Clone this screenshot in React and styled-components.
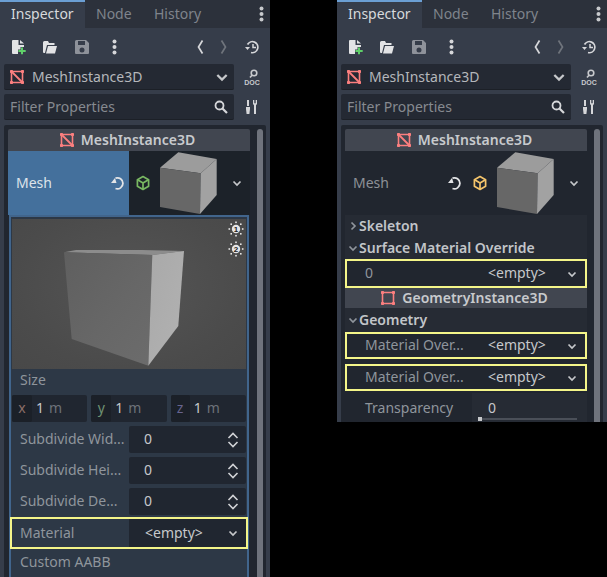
import React from "react";
import styled, { createGlobalStyle } from "styled-components";

const Global = createGlobalStyle`
    html, body { margin: 0; background: #000; }
    body { font-family: "Noto Sans", sans-serif; font-size: 14px; }
`;

const Page = styled.div`
    width: 607px;
    height: 577px;
    display: flex;
    align-items: flex-start;
    gap: 67px;
    overflow: hidden;
`;

const Panel = styled.div`
    width: 270px;
    height: ${(p) => p.$height}px;
    background: #363d4a;
    overflow: hidden;
    display: flex;
    flex-direction: column;
    flex-shrink: 0;
`;

const TabBar = styled.div`
    height: 28px;
    display: flex;
    background: #2c313b;
    flex-shrink: 0;
`;

const Tab = styled.div`
    height: 28px;
    box-sizing: border-box;
    padding-left: 11px;
    width: ${(p) => p.$w}px;
    color: ${(p) => (p.$active ? "#d7d9dc" : "#7f848c")};
    background: ${(p) => (p.$active ? "#363d4a" : "transparent")};
    border-top: 2px solid ${(p) => (p.$active ? "#6b9fd4" : "transparent")};
    line-height: 24px;
`;

const TabMenu = styled.div`
    margin-left: auto;
    width: 7px;
    margin-right: 5px;
    display: flex;
    align-items: center;
`;

const Toolbar = styled.div`
    height: 36px;
    box-sizing: border-box;
    padding-top: 2px;
    display: flex;
    align-items: center;
    flex-shrink: 0;
`;

const ToolButton = styled.div`
    width: ${(p) => p.$w || 16}px;
    height: 16px;
    margin-left: ${(p) => p.$ml || 0}px;
    display: flex;
    justify-content: center;
    flex-shrink: 0;
`;

const FieldRow = styled.div`
    height: 26px;
    display: flex;
    align-items: center;
    margin: 0 0 4px 4px;
    flex-shrink: 0;
`;

const Field = styled.div`
    width: 230px;
    height: 26px;
    box-sizing: border-box;
    background: #242933;
    border-radius: 2px;
    border-bottom: 1px solid #1c2027;
    display: flex;
    align-items: center;
    padding: 0 ${(p) => p.$pr}px 0 ${(p) => p.$pl}px;
    color: ${(p) => p.$color};
    gap: 6px;
`;

const SideButton = styled.div`
    width: 36px;
    display: flex;
    justify-content: center;
    flex-shrink: 0;
`;

const Grow = styled.span`
    flex: 1;
`;

const Label = styled.span`
    margin-top: -2px;
`;

const NodeName = styled.span`
    margin-left: 1px;
`;

const Inspector = styled.div`
    margin: 1px 4px 0;
    padding: 4px 3px 0 4px;
    background: #21262f;
    border-radius: 2px 2px 0 0;
    flex: 1;
    display: flex;
    gap: 7px;
    min-height: 0;
`;

const Content = styled.div`
    width: 242px;
    flex-shrink: 0;
    display: flex;
    flex-direction: column;
`;

const ScrollBar = styled.div`
    width: 6px;
    height: 500px;
    background: #6f737c;
    border-radius: 3px 3px 0 0;
    flex-shrink: 0;
`;

const ClassHeader = styled.div`
    height: ${(p) => p.$h || 22}px;
    box-sizing: border-box;
    padding-right: 4px;
    background: #414650;
    border-radius: ${(p) => (p.$flat ? 0 : "2px 2px 0 0")};
    color: #c8cacd;
    font-weight: 600;
    display: flex;
    align-items: center;
    justify-content: center;
    gap: 6px;
    flex-shrink: 0;
`;

const MeshRow = styled.div`
    height: 64px;
    display: flex;
    flex-shrink: 0;
`;

const MeshLabel = styled.div`
    width: 121px;
    box-sizing: border-box;
    padding: 0 3px 0 8px;
    display: flex;
    align-items: center;
    color: ${(p) => (p.$active ? "#dde3ea" : "#8d9197")};
    background: ${(p) => (p.$active ? "#44709c" : "transparent")};
`;

const MeshValue = styled.div`
    width: 121px;
    box-sizing: border-box;
    padding-left: 6px;
    display: flex;
    align-items: center;
    background: ${(p) => (p.$active ? "#1c2229" : "transparent")};
    border-radius: 0 0 0 2px;
`;

const ThumbBox = styled.div`
    width: 64px;
    height: 64px;
    margin: 0 11px 0 5px;
    flex-shrink: 0;
`;

const SubEditor = styled.div`
    margin-left: 1px;
    width: 240px;
    box-sizing: border-box;
    border: 2px solid #41658c;
    border-bottom: none;
    background: #2d3846;
    padding: 2px 1px 0;
    height: 362px;
    flex-shrink: 0;
`;

const Preview = styled.div`
    height: 150px;
    background: radial-gradient(ellipse at 50% 45%, #555 0%, #4b4b4b 70%, #484848 100%);
    position: relative;
`;

const LightButton = styled.div`
    position: absolute;
    right: 2px;
    top: ${(p) => p.$top}px;
    width: 16px;
    height: 16px;
`;

const Caption = styled.div`
    height: 26px;
    line-height: ${(p) => p.$lh || 22}px;
    padding-left: 8px;
    color: #8f959c;
`;

const VectorRow = styled.div`
    display: flex;
    gap: 4px;
    height: 27px;
    margin-bottom: 4px;
`;

const VectorCell = styled.div`
    flex: 1;
    background: #202630;
    border-radius: 2px;
    display: flex;
    align-items: center;
    color: #c6c8cb;
`;

const AxisTag = styled.span`
    width: ${(p) => p.$w}px;
    height: 100%;
    padding-bottom: 2px;
    box-sizing: border-box;
    background: #1b2028;
    border-radius: 2px;
    display: flex;
    align-items: center;
    justify-content: center;
    color: ${(p) => p.$color};
    margin-right: 4px;
`;

const Unit = styled.span`
    color: #6d7279;
    margin: -2px 0 0 5px;
`;

const PropRow = styled.div`
    height: 27px;
    display: flex;
    align-items: center;
    margin-bottom: 4px;
    color: #8f959c;
`;

const PropName = styled.div`
    width: 117px;
    flex-shrink: 0;
    margin-top: -2px;
    padding-left: 8px;
    box-sizing: border-box;
    white-space: nowrap;
`;

const SpinBox = styled.div`
    flex: 1;
    height: 27px;
    background: #202630;
    border-radius: 2px;
    display: flex;
    align-items: center;
    padding: 0 7px 0 15px;
    color: #c6c8cb;
`;

const Highlight = styled.div`
    height: ${(p) => p.$h}px;
    box-sizing: border-box;
    border: 2px solid #f4f589;
    display: flex;
    align-items: stretch;
    color: #8f959c;
    margin: ${(p) => p.$margin};
    flex-shrink: 0;
`;

const HighlightName = styled.div`
    width: ${(p) => p.$w}px;
    flex-shrink: 0;
    box-sizing: border-box;
    padding-left: ${(p) => p.$pl}px;
    display: flex;
    align-items: center;
    white-space: nowrap;
`;

const EmptyValue = styled.div`
    flex: 1;
    display: flex;
    align-items: center;
    background: ${(p) => (p.$dark ? "#202630" : "transparent")};
    color: #c6c8cb;
    padding: 0 7px 0 ${(p) => p.$pl}px;
`;

const SectionRow = styled.div`
    height: ${(p) => p.$h || 22}px;
    display: flex;
    align-items: center;
    background: #262b34;
    color: #c2c5c9;
    font-weight: 600;
    padding-left: 2px;
    flex-shrink: 0;
`;

const SliderRow = styled.div`
    display: flex;
    color: #8f959c;
    height: 32px;
    margin-top: 2px;
`;

const SliderLabel = styled.div`
    width: 127px;
    box-sizing: border-box;
    padding: 5px 0 0 20px;
    flex-shrink: 0;
`;

const SliderBox = styled.div`
    flex: 1;
    background: #262b34;
    padding: 5px 0 0 16px;
    color: #c6c8cb;
    position: relative;
`;

const SliderTrack = styled.div`
    position: absolute;
    left: 6px;
    right: 10px;
    top: 25px;
    height: 2px;
    background: #4a4f58;
`;

const SliderGrabber = styled.div`
    position: absolute;
    left: 0;
    top: -1px;
    width: 4px;
    height: 4px;
    background: #c6c8cb;
`;

function NodeIcon({ cross = true, size = 16 }) {
    return (
        <svg width={size} height={size} viewBox="0 0 16 16" fill="none" stroke="#fc7f7f">
            <path d="M2.500 2.500h11v11h-11z" strokeWidth="1.600" />
            {cross && <path d="M3 3l10 10" strokeWidth="1.800" />}
            <g fill="#fc7f7f" stroke="none">
                <rect x="1" y="1" width="3" height="3" rx=".7" />
                <rect x="12" y="1" width="3" height="3" rx=".7" />
                <rect x="1" y="12" width="3" height="3" rx=".7" />
                <rect x="12" y="12" width="3" height="3" rx=".7" />
            </g>
        </svg>
    );
}

function Chevron({ color = "#c6c8cb", dir = "down", size = 12 }) {
    let d = dir === "down" ? "M2.500 4.500L6 8l3.500-3.500" : "M4.500 2.500L8 6l-3.500 3.500";
    return (
        <svg width={size} height={size} viewBox="0 0 12 12" fill="none" stroke={color} strokeWidth="1.700">
            <path d={d} />
        </svg>
    );
}

function UpDown() {
    return (
        <svg width="12" height="16" viewBox="0 0 12 16" fill="none" stroke="#d0d2d5" strokeWidth="1.600">
            <path d="M1.500 6L6 1.500 10.500 6M1.500 10L6 14.500 10.500 10" />
        </svg>
    );
}

function Dots({ color = "#c8cacd" }) {
    return (
        <svg width="7" height="16" viewBox="0 0 7 16" fill={color}>
            <circle cx="3.500" cy="2.500" r="2" />
            <circle cx="3.500" cy="8" r="2" />
            <circle cx="3.500" cy="13.500" r="2" />
        </svg>
    );
}

function NewIcon() {
    return (
        <svg width="16" height="16" viewBox="0 0 16 16">
            <path d="M1 2a1 1 0 0 1 1-1h5.500v5H13v2H9.500v2.500H7V15H2a1 1 0 0 1-1-1z" fill="#e2e3e5" />
            <path d="M9 1l4 3.500H9z" fill="#e2e3e5" />
            <path d="M10 8.500h2v2.500h2.700v2H12v2.200h-2V13H7.400v-2H10z" fill="#5fd069" />
        </svg>
    );
}

function OpenIcon() {
    return (
        <svg width="16" height="16" viewBox="0 0 16 16">
            <path d="M1 3.500A1.500 1.500 0 0 1 2.500 2H6l1 2h5.500V6H5L3 14H2a1 1 0 0 1-1-1z" fill="#e2e3e5" />
            <path d="M6 7h9l-2 7.500H4z" fill="#e2e3e5" />
        </svg>
    );
}

function SaveIcon() {
    return (
        <svg width="16" height="16" viewBox="0 0 16 16">
            <path
                fillRule="evenodd"
                d="M2.500 1H12l3 3v10a1 1 0 0 1-1 1H2a1 1 0 0 1-1-1V2.500A1.500 1.500 0 0 1 2.500 1zM4 2v4h7V2zM8 8.500a2.500 2.500 0 1 0 0 5 2.500 2.500 0 0 0 0-5z"
                fill="#8e929a"
            />
        </svg>
    );
}

function HistoryNav({ dir, color }) {
    let d = dir === "left" ? "M6.500 1.500L2.500 8l4 6.500" : "M1.500 1.500L5.500 8l-4 6.500";
    return (
        <svg width="8" height="16" viewBox="0 0 8 16" fill="none" stroke={color} strokeWidth="1.700">
            <path d={d} />
        </svg>
    );
}

function HistoryIcon() {
    return (
        <svg width="16" height="16" viewBox="0 0 16 16" fill="none" stroke="#d6d7da" strokeWidth="1.700">
            <path d="M3.500 5.500A5.500 5.500 0 1 1 7 13.500" />
            <path d="M1 8h5L3.500 11z" fill="#d6d7da" stroke="none" />
            <path d="M9 5v3.500h3" strokeWidth="1.500" />
        </svg>
    );
}

function DocIcon() {
    return (
        <svg width="16" height="16" viewBox="0 0 16 16" fill="none">
            <circle cx="10" cy="4" r="2.800" stroke="#c8cacd" strokeWidth="1.600" />
            <path d="M8 6.200L6 8.500" stroke="#c8cacd" strokeWidth="1.600" />
            <text x="8" y="15.500" fontFamily="'Liberation Sans', sans-serif" fontSize="7" fontWeight="700" fill="#c8cacd" textAnchor="middle">DOC</text>
        </svg>
    );
}

function ToolsIcon() {
    return (
        <svg width="16" height="16" viewBox="0 0 16 16" fill="#d6d7da">
            <path d="M3 1h2v6H3zM2 8h4v2l-.6 5H2.600L2 10z" />
            <path d="M9 1h1.300v3.200h1.400V1H13v4l-1 1.200V15h-2V6.200L9 5z" />
        </svg>
    );
}

function SearchIcon() {
    return (
        <svg width="14" height="14" viewBox="0 0 14 14" fill="none" stroke="#d6d7da" strokeWidth="1.800">
            <circle cx="5.500" cy="5.500" r="4" />
            <path d="M8.500 8.500l4.500 4.500" strokeWidth="2.200" />
        </svg>
    );
}

function ResetIcon() {
    return (
        <svg width="16" height="16" viewBox="0 0 16 16" fill="none" stroke="#e4e5e7" strokeWidth="1.800">
            <path d="M5.500 3.200A5.500 5.500 0 1 1 5.500 13.500" />
            <path d="M1 8h5.500L5 3z" fill="#e4e5e7" stroke="none" />
        </svg>
    );
}

function BoxIcon({ color }) {
    return (
        <svg width="16" height="16" viewBox="0 0 16 16" fill="none" stroke={color} strokeWidth="1.700" strokeLinejoin="round">
            <path d="M8 1.500l5.600 3.200v6.600L8 14.500l-5.600-3.200V4.700z" />
            <path d="M2.600 4.800L8 8l5.400-3.200M8 8v6.300" />
        </svg>
    );
}

function LightIcon({ n }) {
    return (
        <svg width="16" height="16" viewBox="0 0 16 16">
            <circle cx="8" cy="8" r="4.200" fill="#e6e6e6" />
            <g fill="#e6e6e6">
                <rect x="7.200" y="0.500" width="1.600" height="1.600" />
                <rect x="7.200" y="13.900" width="1.600" height="1.600" />
                <rect x="0.500" y="7.200" width="1.600" height="1.600" />
                <rect x="13.900" y="7.200" width="1.600" height="1.600" />
                <rect x="2.400" y="2.400" width="1.600" height="1.600" />
                <rect x="12" y="2.400" width="1.600" height="1.600" />
                <rect x="2.400" y="12" width="1.600" height="1.600" />
                <rect x="12" y="12" width="1.600" height="1.600" />
            </g>
            <text x="8" y="10.700" textAnchor="middle" fontSize="8" fontWeight="700" fontFamily="'Liberation Sans', sans-serif" fill="#222">{n}</text>
        </svg>
    );
}

function PreviewCube() {
    return (
        <svg width="234" height="150" viewBox="0 0 234 150">
            <defs>
                <linearGradient id="cubeFront" x1="0" y1="0" x2="1" y2="1">
                    <stop offset="0" stopColor="#5f5f5f" />
                    <stop offset="0.55" stopColor="#676767" />
                    <stop offset="1" stopColor="#6c6c6c" />
                </linearGradient>
                <linearGradient id="cubeSide" x1="0" y1="0" x2="1" y2="1">
                    <stop offset="0" stopColor="#a9a9a9" />
                    <stop offset="1" stopColor="#b2b2b2" />
                </linearGradient>
            </defs>
            <path d="M52 33.300L64 31 130 31 172 32 140.300 36z" fill="#8c8c8c" />
            <path d="M52 33.300L140.300 36 136.300 146.700 59.700 120z" fill="url(#cubeFront)" />
            <path d="M140.300 36L172 32 166.300 107 136.300 146.700z" fill="url(#cubeSide)" />
        </svg>
    );
}

function ThumbCube() {
    return (
        <svg width="64" height="64" viewBox="0 0 64 64">
            <path d="M4 16.700L22.300 1.300 60.700 8 44.700 22.300z" fill="#9c9c9c" />
            <path d="M4 16.700L44.700 22.300 44 63 4 56z" fill="#676767" />
            <path d="M44.700 22.300L60.700 8 60.700 44 44 63z" fill="#a2a2a2" />
        </svg>
    );
}

function TopChrome({ name }) {
    return (
        <>
            <TabBar>
                <Tab $active $w={85}>Inspector</Tab>
                <Tab $w={58}>Node</Tab>
                <Tab $w={70}>History</Tab>
                <TabMenu><Dots /></TabMenu>
            </TabBar>
            <Toolbar>
                <ToolButton $ml={11}><NewIcon /></ToolButton>
                <ToolButton $ml={15}><OpenIcon /></ToolButton>
                <ToolButton $ml={16}><SaveIcon /></ToolButton>
                <ToolButton $ml={21} $w={7}><Dots color="#d6d7da" /></ToolButton>
                <ToolButton $ml={78} $w={8}><HistoryNav dir="left" color="#d6d7da" /></ToolButton>
                <ToolButton $ml={16} $w={8}><HistoryNav dir="right" color="#6f747c" /></ToolButton>
                <ToolButton $ml={16}><HistoryIcon /></ToolButton>
            </Toolbar>
            <FieldRow>
                <Field $pl={5} $pr={4} $color="#b4b7bb">
                    <NodeIcon />
                    <NodeName>{name}</NodeName>
                    <Grow />
                    <Chevron size={16} />
                </Field>
                <SideButton><DocIcon /></SideButton>
            </FieldRow>
            <FieldRow>
                <Field $pl={6} $pr={6} $color="#868a90">
                    <span>Filter Properties</span>
                    <Grow />
                    <SearchIcon />
                </Field>
                <SideButton><ToolsIcon /></SideButton>
            </FieldRow>
        </>
    );
}

function SpinRow({ name }) {
    return (
        <PropRow>
            <PropName>{name}</PropName>
            <SpinBox>
                <Label>0</Label>
                <Grow />
                <UpDown />
            </SpinBox>
        </PropRow>
    );
}

function EmptyPicker({ pl, dark }) {
    return (
        <EmptyValue $pl={pl} $dark={dark}>
            <Label>&lt;empty&gt;</Label>
            <Grow />
            <Chevron />
        </EmptyValue>
    );
}

function LeftPanel() {
    return (
        <Panel $height={577}>
            <TopChrome name="MeshInstance3D" />
            <Inspector>
                <Content>
                    <ClassHeader><NodeIcon /><Label>MeshInstance3D</Label></ClassHeader>
                    <MeshRow>
                        <MeshLabel $active>
                            <Label>Mesh</Label>
                            <Grow />
                            <ResetIcon />
                        </MeshLabel>
                        <MeshValue $active>
                            <BoxIcon color="#79b862" />
                            <ThumbBox><ThumbCube /></ThumbBox>
                            <Chevron />
                        </MeshValue>
                    </MeshRow>
                    <SubEditor>
                        <Preview>
                            <PreviewCube />
                            <LightButton $top={2}><LightIcon n="1" /></LightButton>
                            <LightButton $top={22}><LightIcon n="2" /></LightButton>
                        </Preview>
                        <Caption>Size</Caption>
                        <VectorRow>
                            <VectorCell>
                                <AxisTag $w={20} $color="#8c6f68">x</AxisTag><Label>1</Label><Unit>m</Unit>
                            </VectorCell>
                            <VectorCell>
                                <AxisTag $w={20} $color="#6f9273">y</AxisTag><Label>1</Label><Unit>m</Unit>
                            </VectorCell>
                            <VectorCell>
                                <AxisTag $w={19} $color="#67648f">z</AxisTag><Label>1</Label><Unit>m</Unit>
                            </VectorCell>
                        </VectorRow>
                        <SpinRow name="Subdivide Wid..." />
                        <SpinRow name="Subdivide Hei..." />
                        <SpinRow name="Subdivide De..." />
                        <Highlight $h={32} $margin="-2px -2px 0 -2px">
                            <HighlightName $w={117} $pl={8}><Label>Material</Label></HighlightName>
                            <EmptyPicker pl={16} dark />
                        </Highlight>
                        <Caption $lh={26}>Custom AABB</Caption>
                    </SubEditor>
                </Content>
                <ScrollBar />
            </Inspector>
        </Panel>
    );
}

function RightPanel() {
    return (
        <Panel $height={422}>
            <TopChrome name="MeshInstance3D" />
            <Inspector>
                <Content>
                    <ClassHeader><NodeIcon /><Label>MeshInstance3D</Label></ClassHeader>
                    <MeshRow>
                        <MeshLabel>
                            <Label>Mesh</Label>
                            <Grow />
                            <ResetIcon />
                        </MeshLabel>
                        <MeshValue>
                            <BoxIcon color="#f5c56b" />
                            <ThumbBox><ThumbCube /></ThumbBox>
                            <Chevron />
                        </MeshValue>
                    </MeshRow>
                    <SectionRow><Chevron dir="right" color="#8f959c" /><Label>Skeleton</Label></SectionRow>
                    <SectionRow><Chevron color="#8f959c" /><Label>Surface Material Override</Label></SectionRow>
                    <Highlight $h={29} $margin="0">
                        <HighlightName $w={127} $pl={18}><Label>0</Label></HighlightName>
                        <EmptyPicker pl={14} />
                    </Highlight>
                    <ClassHeader $h={20} $flat><NodeIcon cross={false} /><Label>GeometryInstance3D</Label></ClassHeader>
                    <SectionRow $h={24}><Chevron color="#8f959c" /><Label>Geometry</Label></SectionRow>
                    <Highlight $h={27} $margin="0 0 5px">
                        <HighlightName $w={127} $pl={18}><Label>Material Over...</Label></HighlightName>
                        <EmptyPicker pl={14} />
                    </Highlight>
                    <Highlight $h={27} $margin="0">
                        <HighlightName $w={127} $pl={18}><Label>Material Over...</Label></HighlightName>
                        <EmptyPicker pl={14} />
                    </Highlight>
                    <SliderRow>
                        <SliderLabel>Transparency</SliderLabel>
                        <SliderBox>
                            0
                            <SliderTrack><SliderGrabber /></SliderTrack>
                        </SliderBox>
                    </SliderRow>
                </Content>
                <ScrollBar />
            </Inspector>
        </Panel>
    );
}

export default function App() {
    return (
        <Page>
            <Global />
            <LeftPanel />
            <RightPanel />
        </Page>
    );
}
